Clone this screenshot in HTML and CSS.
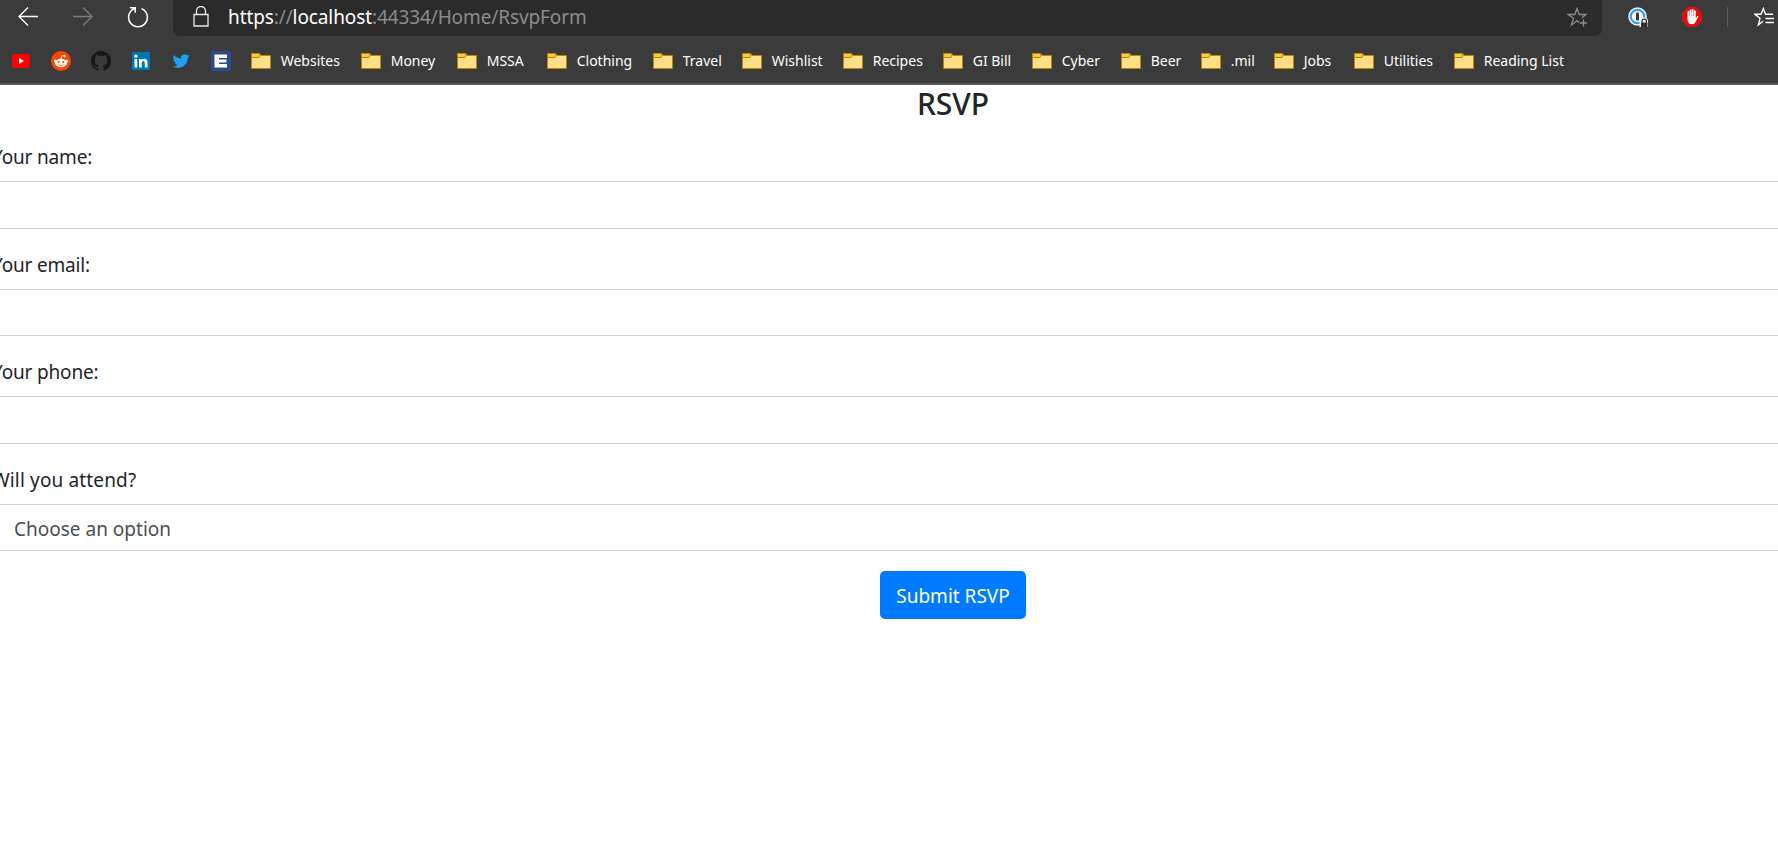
FILE: index.html
```html
<!DOCTYPE html>
<html lang="en">
<head>
<meta charset="utf-8">
<title>RSVP</title>
<link rel="stylesheet" href="styles.css">
</head>
<body>
<svg width="0" height="0" class="defs">
  <symbol id="folder" viewBox="0 0 20 16">
    <path d="M.5.5h8l1.500 2h9.500v13H.5z" fill="#ffdf85" stroke="#b8860b"/>
    <path d="M.5.5h7.500l1 1.500-1 2.500H.5z" fill="#fdcb35" stroke="#b8860b"/>
  </symbol>
</svg>
<header class="chrome">
  <div class="toolbar">
    <div class="nav">
      <svg width="20" height="20" viewBox="0 0 20 20" fill="none" stroke="#fff" stroke-width="1.300"><path d="M20 9.500H1M10 .5l-9 9 9 9"/></svg>
      <svg width="20" height="20" viewBox="0 0 20 20" fill="none" stroke="#7d7d7d" stroke-width="1.300"><path d="M0 9.500h19M10 .5l9 9-9 9"/></svg>
      <svg width="22" height="22" viewBox="0 0 22 22" fill="none" stroke="#fff" stroke-width="1.500"><path d="M14.500 2.600A9.400 9.400 0 1 1 7.500 2.600M3 1.800h5.200v5"/></svg>
    </div>
    <div class="address">
      <svg class="lock" width="16" height="21" viewBox="0 0 16 21" fill="none" stroke="#e8e8e8" stroke-width="1.300"><path d="M1 8.500h14v11.500H1zM3.500 8.500V5a4.500 4.500 0 0 1 9 0v3.500"/></svg>
      <div class="url"><span class="lit">https</span>://<span class="lit">localhost</span>:44334/Home/RsvpForm</div>
      <svg class="star" width="21" height="21" viewBox="0 0 21 21" fill="none" stroke="#8c8c8c" stroke-width="1.300"><path d="M12.500 15.500L10 13.700l-5.500 4.300 2-6.700L1 7.500h6.800L10 1.500l2.200 6H19l-4.200 3.200M16.500 12.500v7M13 16h7"/></svg>
    </div>
    <div class="extensions">
      <svg width="20" height="20" viewBox="0 0 20 20"><circle cx="9.500" cy="9.500" r="9.300" fill="#f6f6f6"/><circle cx="9.500" cy="9.500" r="6.700" fill="none" stroke="#3b9bf5" stroke-width="2.200"/><rect x="8" y="5.500" width="3" height="8" rx="1" fill="#3a3a3a"/><path d="M11.500 20v-6q0-3.500 4.500-3.500 4 0 4 3.500v6z" fill="#f6f6f6"/><path d="M13 15.500h6.500V20H13z" fill="#303030"/><path d="M14 16v-1.700a2.200 2.200 0 0 1 4.400 0V16" fill="none" stroke="#303030" stroke-width="1.200"/></svg>
      <svg width="20" height="20" viewBox="0 0 20 20"><path d="M6 0h8l6 6v8l-6 6H6l-6-6V6z" fill="#e40d0d"/><path d="M5.500 11V5q0-.9.800-.9t.8.900v4h.4V3.500q0-.9.900-.9t.9.900V9h.4V2.800q0-.9.900-.9t.9.900V9h.4V4.200q0-.9.900-.9t.9.900v7.300l1.200-2q.7-.8 1.500-.2l-2.700 5.500Q12.800 17.300 10 17.300q-4.500 0-4.500-5z" fill="#fff"/></svg>
      <span class="divider"></span>
      <svg width="20" height="20" viewBox="0 0 20 20" fill="none" stroke="#fff" stroke-width="1.400"><path d="M9 14.300L4.300 18l1.700-6.700L1 7.300h6L9.300 1.500l2.200 5.800H19M11.500 11.500H20M11.500 15.500H20"/></svg>
    </div>
  </div>
  <nav class="bookmarks">
    <div class="sites">
      <svg width="20" height="20" viewBox="0 0 20 20"><rect x="1" y="3" width="18" height="14" rx="3" fill="#f00"/><path d="M8 7l5 3-5 3z" fill="#fff"/></svg>
      <svg width="20" height="20" viewBox="0 0 20 20"><circle cx="10" cy="10" r="10" fill="#ff4500"/><ellipse cx="10" cy="12" rx="6" ry="4.200" fill="#fff"/><circle cx="4.300" cy="10" r="1.500" fill="#fff"/><circle cx="15.700" cy="10" r="1.500" fill="#fff"/><circle cx="13.500" cy="5" r="1.200" fill="#fff"/><path d="M10 8l1-3.500 2.500.5" fill="none" stroke="#fff" stroke-width=".8"/><circle cx="7.700" cy="11" r="1.100" fill="#ff4500"/><circle cx="12.300" cy="11" r="1.100" fill="#ff4500"/><path d="M7.500 13.700q2.500 1.600 5 0" fill="none" stroke="#ff4500" stroke-width=".8"/></svg>
      <svg width="20" height="20" viewBox="0 0 16 16"><path fill="#161616" d="M8 0C3.580 0 0 3.580 0 8c0 3.540 2.290 6.530 5.470 7.590.4.070.55-.17.55-.38 0-.19-.01-.82-.01-1.490-2.010.37-2.530-.49-2.690-.94-.09-.23-.48-.94-.82-1.130-.28-.15-.68-.52-.01-.53.63-.01 1.080.58 1.230.82.72 1.210 1.870.87 2.330.66.070-.52.280-.87.510-1.070-1.780-.2-3.640-.89-3.640-3.950 0-.87.310-1.590.82-2.150-.08-.2-.36-1.020.08-2.120 0 0 .67-.21 2.200.82.640-.18 1.320-.27 2-.27s1.360.09 2 .27c1.530-1.040 2.200-.82 2.200-.82.440 1.100.16 1.920.08 2.120.51.56.82 1.270.82 2.150 0 3.070-1.870 3.750-3.650 3.950.29.25.54.73.54 1.480 0 1.070-.01 1.930-.01 2.200 0 .21.15.46.55.38A8.010 8.010 0 0 0 16 8c0-4.420-3.580-8-8-8z"/></svg>
      <svg width="20" height="20" viewBox="0 0 20 20"><rect x="1" y="1" width="18" height="18" rx="1" fill="#0077b5"/><path d="M3.500 8h2.700v8.500H3.500zM8 8h2.600v1.200Q11.500 7.800 13.300 7.800q3.200 0 3.200 4v4.700h-2.700v-4.200q0-2.200-1.500-2.200-1.600 0-1.600 2.200v4.200H8z" fill="#fff"/><circle cx="4.850" cy="5.200" r="1.600" fill="#fff"/></svg>
      <svg width="20" height="20" viewBox="0 0 24 24"><path transform="translate(2 2) scale(.84)" fill="#1da1f2" d="M23.950 4.570a10 10 0 0 1-2.820.77 4.960 4.960 0 0 0 2.160-2.720c-.95.550-2 .95-3.130 1.180a4.920 4.920 0 0 0-8.380 4.480C7.690 8.090 4.070 6.130 1.640 3.160a4.920 4.920 0 0 0 1.520 6.570 4.900 4.900 0 0 1-2.230-.61v.06c0 2.390 1.700 4.380 3.950 4.830a5 5 0 0 1-2.210.08 4.940 4.940 0 0 0 4.600 3.420A9.870 9.870 0 0 1 0 19.540a13.990 13.990 0 0 0 7.550 2.210c9.050 0 14-7.500 14-13.980 0-.21 0-.42-.02-.63a9.940 9.940 0 0 0 2.420-2.570z"/></svg>
      <svg width="20" height="20" viewBox="0 0 20 20"><path fill="#2b4a8f" d="M0 0h20v20H0z"/><path fill="#fff" d="M3.500 3.500H16V7H8v1.500h7.500v3H8V13h8v3.500H3.500z"/></svg>
    </div>
    <div class="folders">
      <span class="bm websites"><svg><use href="#folder"/></svg>Websites</span>
      <span class="bm money"><svg><use href="#folder"/></svg>Money</span>
      <span class="bm mssa"><svg><use href="#folder"/></svg>MSSA</span>
      <span class="bm clothing"><svg><use href="#folder"/></svg>Clothing</span>
      <span class="bm travel"><svg><use href="#folder"/></svg>Travel</span>
      <span class="bm wishlist"><svg><use href="#folder"/></svg>Wishlist</span>
      <span class="bm recipes"><svg><use href="#folder"/></svg>Recipes</span>
      <span class="bm gibill"><svg><use href="#folder"/></svg>GI Bill</span>
      <span class="bm cyber"><svg><use href="#folder"/></svg>Cyber</span>
      <span class="bm beer"><svg><use href="#folder"/></svg>Beer</span>
      <span class="bm mil"><svg><use href="#folder"/></svg>.mil</span>
      <span class="bm jobs"><svg><use href="#folder"/></svg>Jobs</span>
      <span class="bm utilities"><svg><use href="#folder"/></svg>Utilities</span>
      <span class="bm reading"><svg><use href="#folder"/></svg>Reading List</span>
    </div>
  </nav>
</header>
<main class="page">
  <h4 class="title">RSVP</h4>
  <form>
    <div class="group name"><label for="name">Your name:</label><input id="name" class="control"></div>
    <div class="group email"><label for="email">Your email:</label><input id="email" class="control"></div>
    <div class="group phone"><label for="phone">Your phone:</label><input id="phone" class="control"></div>
    <div class="group attend"><label for="attend">Will you attend?</label><select id="attend" class="control"><option>Choose an option</option></select></div>
    <div class="actions"><button type="button" class="submit">Submit RSVP</button></div>
  </form>
</main>
</body>
</html>
```
FILE: styles.css
```css
* { box-sizing: border-box; }
body { margin: 0; height: 842px; overflow: hidden; background: #fff; font-family: "Noto Sans", "Open Sans", sans-serif; }
.defs { display: block; position: absolute; }
.chrome { height: 85px; background: #3b3b3b; border-bottom: 2px solid #5a5a5a; }
.toolbar { display: flex; height: 36px; }
.nav { display: flex; width: 173px; padding: 7px 0 0 18px; gap: 35px; flex: none; }
.nav svg:last-child { margin-top: -1px; margin-left: -1px; }
.address { display: flex; width: 1429px; flex: none; background: #2b2b2b; border-radius: 0 0 7px 7px; padding: 0 14px 0 19.5px; }
.lock { margin-top: 6px; flex: none; }
.url { margin-left: 19.5px; flex: 1; font-size: 19px; line-height: 34px; color: #8c8c8c; white-space: nowrap; letter-spacing: -.11px; }
.lit { color: #fff; }
.star { margin-top: 7px; flex: none; }
.extensions { display: flex; align-items: flex-start; padding: 7px 0 0 26px; flex: none; }
.extensions svg:nth-child(2) { margin-left: 34px; }
.divider { width: 1px; height: 20px; background: #5c5c5c; margin: 0 26px 0 25px; }
.bookmarks { display: flex; align-items: center; height: 47px; padding: 3px 0 0 11px; }
.sites { display: flex; gap: 20px; width: 240px; flex: none; }
.folders { display: flex; color: #fff; font-size: 14px; line-height: 20px; white-space: nowrap; }
.bm { display: flex; align-items: center; gap: 9.7px; flex: none; }
.bm svg { width: 20px; height: 16px; flex: none; }
.websites { width: 110px; }
.money { width: 96px; }
.mssa { width: 90px; }
.clothing { width: 106px; }
.travel { width: 89px; }
.wishlist { width: 101px; }
.recipes { width: 100px; }
.gibill { width: 89px; }
.cyber { width: 89px; }
.beer { width: 80px; }
.mil { width: 73px; }
.jobs { width: 80px; }
.utilities { width: 100px; }
.page { width: 1922px; margin-left: -8px; color: #212529; font-size: 19px; line-height: 30px; }
.title { margin: 0 0 18px; padding-top: 1px; height: 38px; font-size: 30px; line-height: 36px; font-weight: 500; text-align: center; }
.group { margin-bottom: 20px; }
.group label { display: block; padding-top: 1px; height: 30px; margin-bottom: 10px; white-space: nowrap; letter-spacing: -.17px; }
.group.attend label { letter-spacing: .15px; }
.control { display: block; width: 100%; height: 47.5px; appearance: none; margin: 0; padding: 9px 21px 6px; border: 1px solid #ced4da; border-radius: 5px; background: #fff; color: #495057; font: inherit; }
.actions { text-align: center; }
.submit { width: 146px; height: 48px; padding: 2px 0 0; border: 0; border-radius: 5px; background: #007bff; color: #fff; font: inherit; white-space: nowrap; }
```
